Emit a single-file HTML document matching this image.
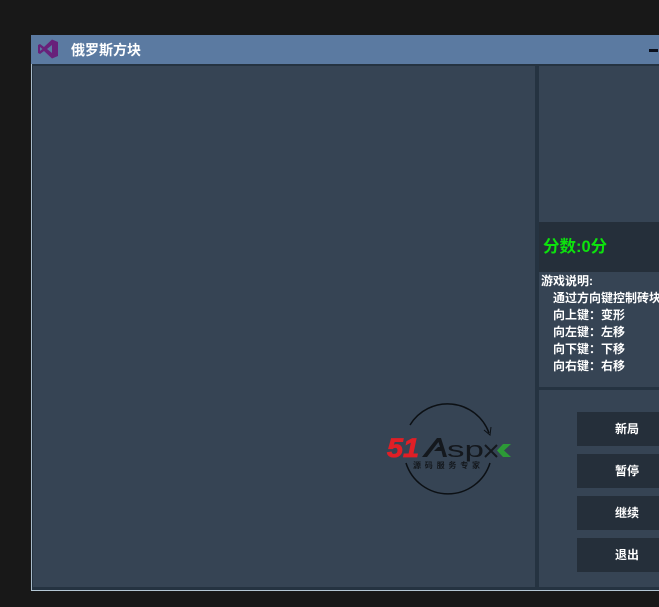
<!DOCTYPE html>
<html>
<head>
<meta charset="utf-8">
<style>
html,body{margin:0;padding:0;width:659px;height:607px;overflow:hidden;background:#181818;}
body{position:relative;font-family:"Liberation Sans","WenQuanYi Zen Hei","Noto Sans CJK SC",sans-serif;}
div{position:absolute;box-sizing:border-box;}
.t{color:#fff;font-size:12px;line-height:17px;font-weight:bold;white-space:nowrap;}
.b{left:577px;width:82px;height:34px;background:#252f3a;color:#fff;font-size:12px;font-weight:bold;line-height:34px;padding-left:38px;white-space:nowrap;}
</style>
</head>
<body>
<div style="left:31px;top:35px;width:628px;height:556px;background:#253341;"></div>
<div style="left:31px;top:35px;width:628px;height:29px;background:#5b7aa1;"></div>
<div style="left:31px;top:64px;width:1px;height:527px;background:#a9bccb;"></div>
<div style="left:31px;top:590px;width:628px;height:1px;background:#b4c7d4;"></div>
<svg style="position:absolute;left:37px;top:39px" width="22" height="20" viewBox="0 0 22 20"><path d="M15 0.5 L21 3 V17 L15 19.5 L7 12 L3 15 L1 14 V6 L3 5 L7 8 Z M15 6 L10 10 L15 14 Z M3 8 V12 L5.5 10 Z" fill="#68217a" fill-rule="evenodd"/></svg>
<div class="t" style="left:71px;top:42px;font-size:14px;">俄罗斯方块</div>
<div style="left:649px;top:49px;width:9px;height:3px;background:#0a0f1c;"></div>

<div style="left:33px;top:66px;width:502px;height:521px;background:#364454;"></div>
<div style="left:539px;top:66px;width:120px;height:156px;background:#364454;"></div>
<div style="left:539px;top:222px;width:120px;height:50px;background:#252f3a;"></div>
<div style="left:539px;top:272px;width:120px;height:115px;background:#364454;"></div>
<div style="left:539px;top:390px;width:120px;height:197px;background:#364454;"></div>

<div style="left:543px;top:236px;color:#0de20d;font-size:16.5px;line-height:22px;font-weight:bold;white-space:nowrap;">分数:0分</div>
<div class="t" style="left:541px;top:273px;">游戏说明:</div>
<div class="t" style="left:553px;top:290px;">通过方向键控制砖块</div>
<div class="t" style="left:553px;top:307px;">向上键：变形</div>
<div class="t" style="left:553px;top:324px;">向左键：左移</div>
<div class="t" style="left:553px;top:341px;">向下键：下移</div>
<div class="t" style="left:553px;top:358px;">向右键：右移</div>

<div class="b" style="top:412px;">新局</div>
<div class="b" style="top:454px;">暂停</div>
<div class="b" style="top:496px;">继续</div>
<div class="b" style="top:538px;">退出</div>

<svg style="position:absolute;left:385px;top:400px" width="130" height="96" viewBox="0 0 130 96">
<path d="M25 25 A44 44 0 0 1 104 33" fill="none" stroke="#0c1014" stroke-width="1.5"/>
<path d="M99 30 L105 35 L106 27" fill="none" stroke="#0c1014" stroke-width="1"/>
<path d="M21 63 A44 44 0 0 0 105 63" fill="none" stroke="#0c1014" stroke-width="1.5"/>
<text x="2" y="57" font-family="Liberation Sans" font-size="27" font-weight="bold" font-style="italic" fill="#e01f26" stroke="#e01f26" stroke-width="0.8" textLength="32" lengthAdjust="spacingAndGlyphs">51</text>
<path d="M37 57 L52 38 L56 38 L62 57 L58 57 L56.5 51 L49 51 L53 47 L55 47 L53.5 42 L42 57 Z" fill="#14181d"/>
<text x="62" y="57" font-family="Liberation Sans" font-size="22" fill="#14181d" textLength="37" lengthAdjust="spacingAndGlyphs">sp</text>
<path d="M100 45 L112 57 M100 57 L112 45" stroke="#14181d" stroke-width="2" fill="none"/>
<path d="M126 44 L118 44 L112 50.5 L118 57 L126 57 L119 50.5 Z" fill="#2c9a36"/>
<text x="28" y="68" font-family="WenQuanYi Zen Hei, Noto Sans CJK SC, sans-serif" font-size="8" font-weight="bold" fill="#14181d" textLength="67">源码服务专家</text>
</svg>
</body>
</html>
